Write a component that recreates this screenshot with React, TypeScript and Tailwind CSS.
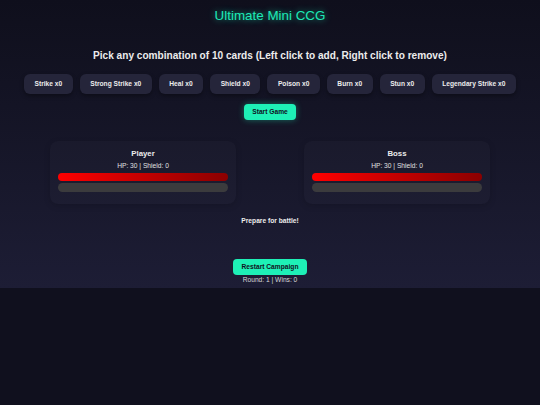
import React from 'react';

const cards = ['Strike', 'Strong Strike', 'Heal', 'Shield', 'Poison', 'Burn', 'Stun', 'Legendary Strike'];

const Fighter: React.FC<{ name: string; hp: number; shield: number }> = ({ name, hp, shield }) => (
    <div className="w-[186px] rounded-[8px] bg-white/[0.02] px-[8px] pt-[8px] pb-[12px] text-center shadow-[0_2px_6px_rgba(0,0,0,0.15)]">
        <div className="text-[7.8px] font-bold leading-[10px] text-[#ececec]">{name}</div>
        <div className="mt-[2px] text-[6.67px] leading-[10px] text-[#e0e0e0]">
            HP: {hp} | Shield: {shield}
        </div>
        <div className="mt-[2px] h-[8px] w-full rounded-full bg-gradient-to-r from-[#ff0000] to-[#8b0000]" />
        <div className="mt-[2px] h-[9px] w-full rounded-full bg-[#3b3b3d]" />
    </div>
);

export default function App() {
    return (
        <div className="min-h-screen bg-[#10101e] font-['Liberation_Sans',Arial,sans-serif] text-white">
            <div className="flex h-[288px] flex-col items-center bg-gradient-to-b from-[#0f0f1c] to-[#1d1d35]">
                <h1 className="mt-[7px] text-[13.4px] leading-[17px] text-[#1de9b6] [text-shadow:0_0_6px_rgba(29,233,182,0.7)]">
                    Ultimate Mini CCG
                </h1>
                <h2 className="mt-[26px] text-[10.1px] font-bold leading-[12px] text-[#ececec]">
                    Pick any combination of 10 cards (Left click to add, Right click to remove)
                </h2>
                <div className="mt-[12px] flex gap-[7px]">
                    {cards.map((c) => (
                        <button
                            key={c}
                            className="h-[20px] rounded-[6px] bg-[#25253a] px-[10.5px] text-[6.67px] font-bold text-[#ececec] shadow-[0_2px_4px_rgba(0,0,0,0.35)]"
                        >
                            {c} x0
                        </button>
                    ))}
                </div>
                <button className="mt-[10px] h-[16px] rounded-[4px] bg-[#1ef0b6] px-[8px] text-[6.67px] font-bold text-[#10101e] shadow-[0_0_6px_rgba(30,240,182,0.4)]">
                    Start Game
                </button>
                <div className="mt-[21px] flex gap-[68px]">
                    <Fighter name="Player" hp={30} shield={0} />
                    <Fighter name="Boss" hp={30} shield={0} />
                </div>
                <div className="mt-[12px] text-[6.67px] font-bold leading-[10px] text-[#ececec]">Prepare for battle!</div>
                <button className="mt-[33px] h-[16px] rounded-[4px] bg-[#1ef0b6] px-[8.5px] text-[6.67px] font-bold text-[#10101e]">
                    Restart Campaign
                </button>
                <div className="text-[6.67px] leading-[9px] text-[#d8d8d8]">Round: 1 | Wins: 0</div>
            </div>
        </div>
    );
}
